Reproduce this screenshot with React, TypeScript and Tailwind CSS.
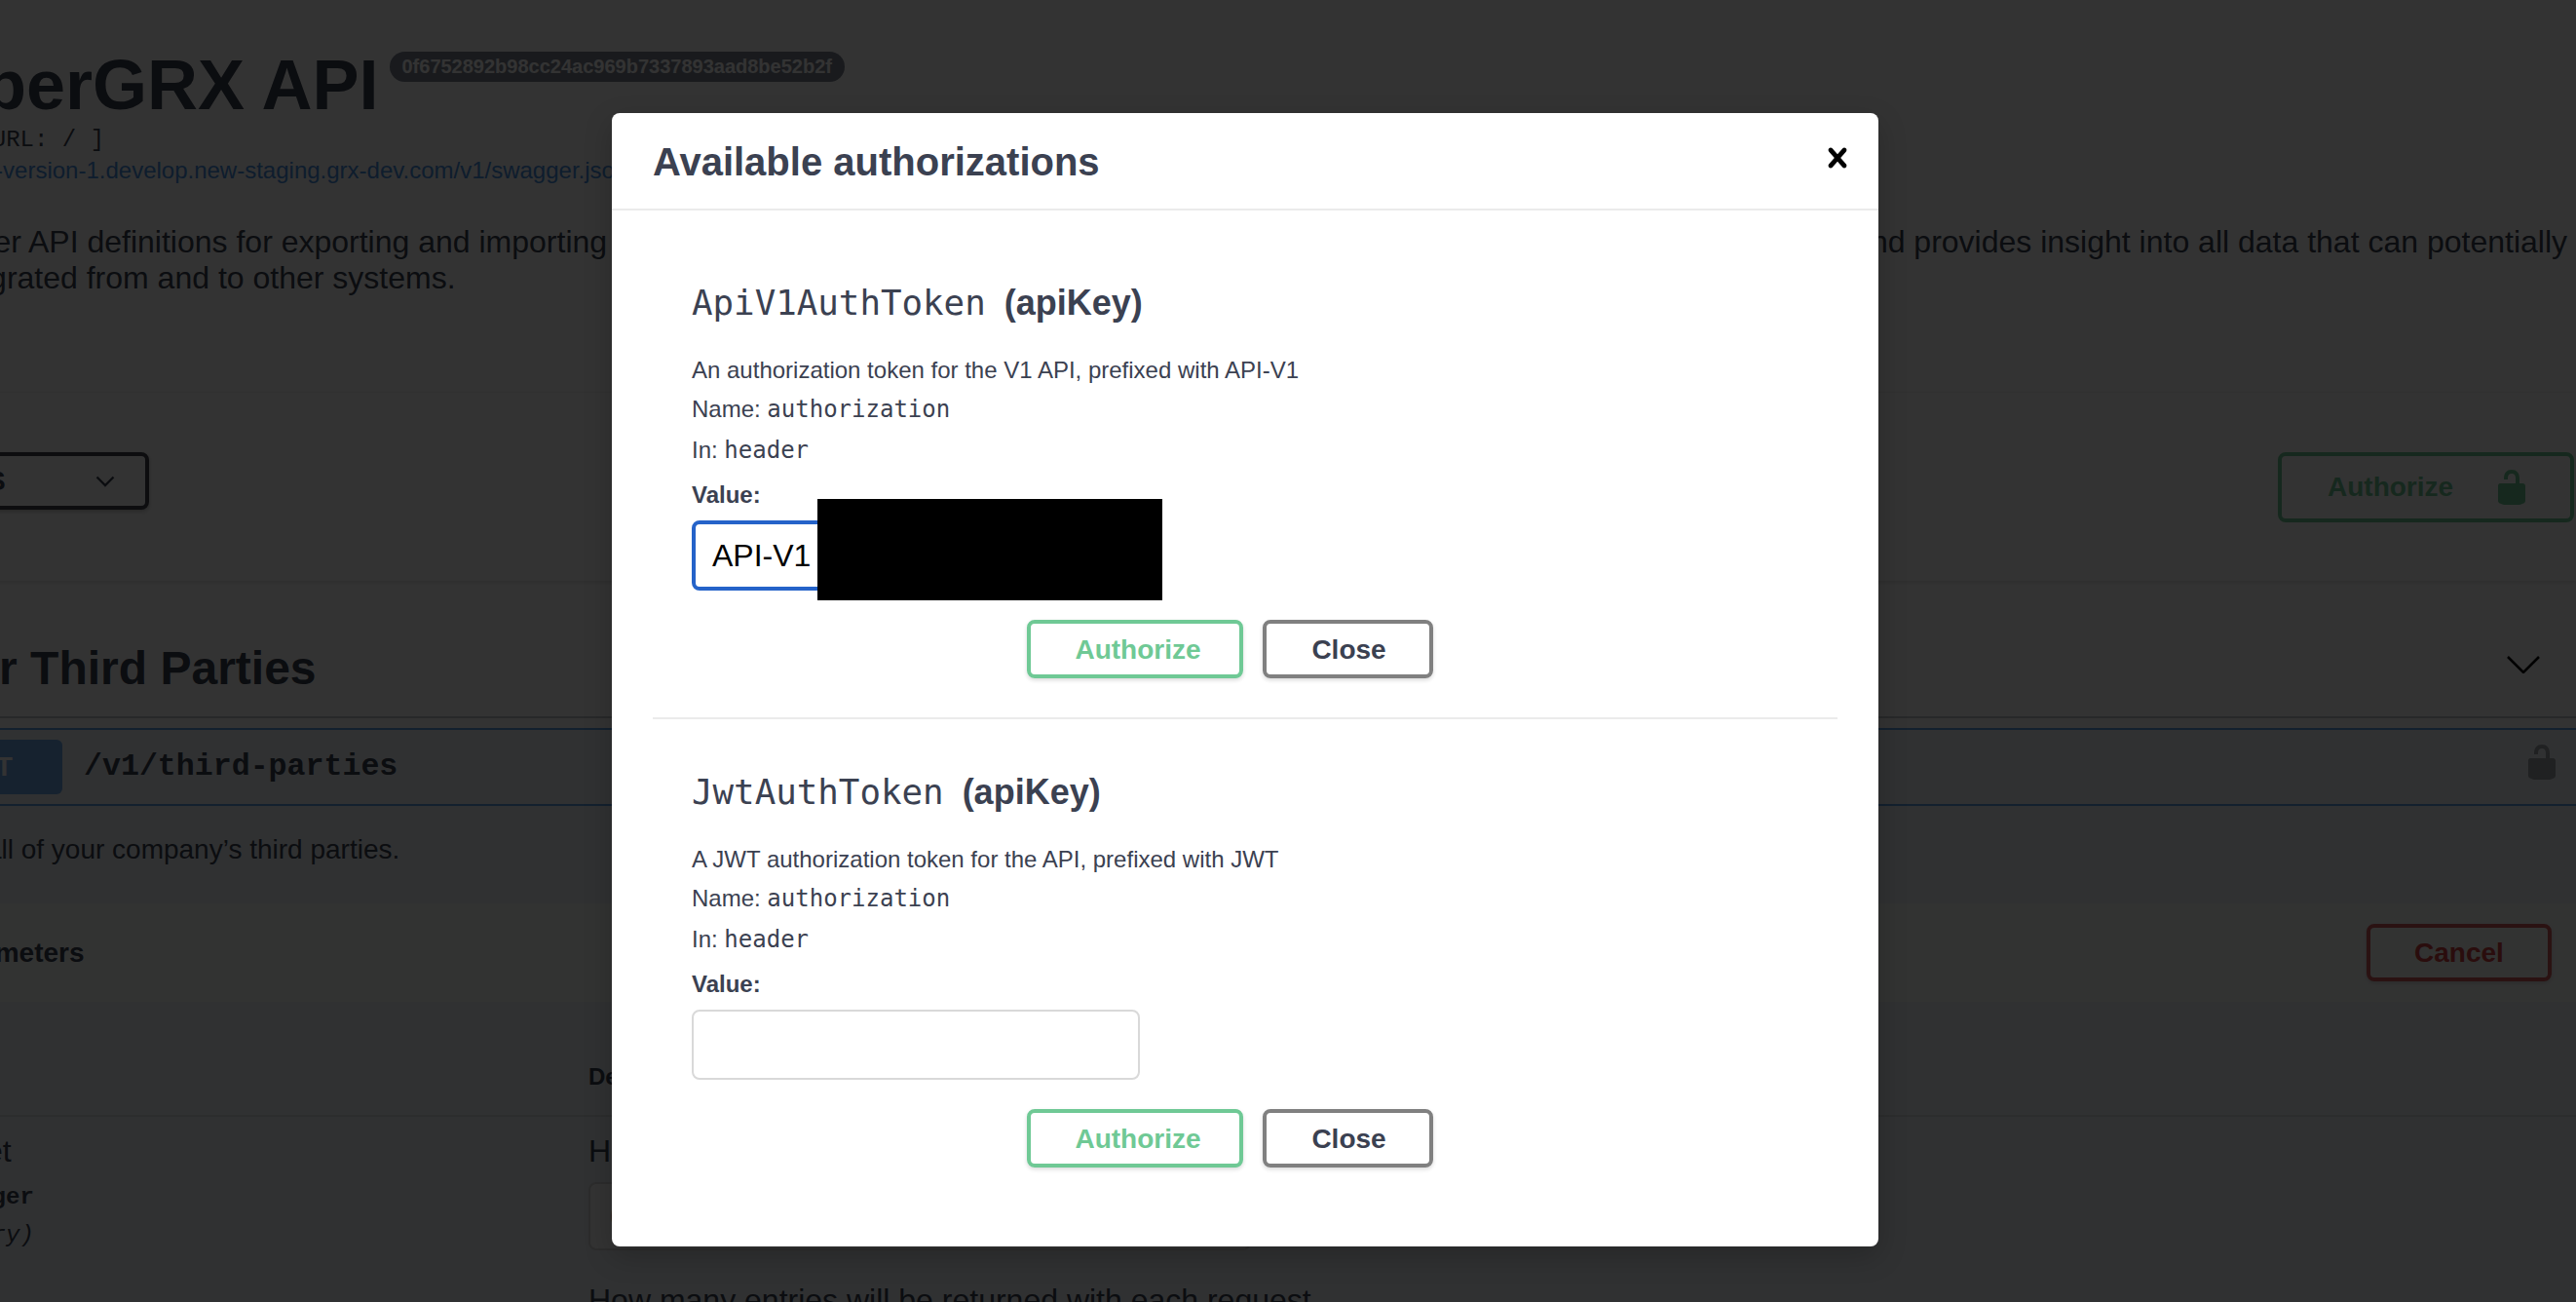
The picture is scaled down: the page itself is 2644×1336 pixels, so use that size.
import React from 'react';

// swagger-ui's own glyphs
const UnlockedIcon = ({ className }: { className: string }) => (
  <svg viewBox="0 0 20 20" className={className} fill="currentColor">
    <path d="M15.8 8H14V5.6C14 2.703 12.665 1 10 1 7.334 1 6 2.703 6 5.6V6h2v-.801C8 3.754 8.797 3 10 3c1.203 0 2 .754 2 2.199V8H4c-.553 0-1 .646-1 1.199V17c0 .549.428 1.139.951 1.307l1.197.387C5.672 18.861 6.55 19 7.1 19h5.8c.549 0 1.428-.139 1.951-.307l1.196-.387c.524-.167.953-.757.953-1.306V9.199C17 8.646 16.352 8 15.8 8z" />
  </svg>
);

const CloseIcon = () => (
  <svg viewBox="0 0 20 20" className="w-[40px] h-[40px] text-black" fill="currentColor">
    <path d="M14.348 14.849c-.469.469-1.229.469-1.697 0L10 11.819l-2.651 3.029c-.469.469-1.229.469-1.697 0-.469-.469-.469-1.229 0-1.697l2.758-3.15-2.759-3.152c-.469-.469-.469-1.228 0-1.697.469-.469 1.228-.469 1.697 0L10 8.183l2.651-3.031c.469-.469 1.228-.469 1.697 0 .469.469.469 1.229 0 1.697l-2.758 3.152 2.758 3.15c.469.469.469 1.229 0 1.698z" />
  </svg>
);

function AuthBlock({ name, description, value }: { name: string; description: string; value?: string }) {
  return (
    <div className="pl-[40px]">
      <h4 className="text-[36px] leading-[42px] font-bold whitespace-nowrap">
        <span className="font-['DejaVu_Sans_Mono',monospace] font-normal text-[35.8px]">{name}</span>
        <span className="ml-[19px]">(apiKey)</span>
      </h4>
      <p className="mt-[34px] text-[24px] leading-[28px]">{description}</p>
      <p className="mt-[12px] text-[24px] leading-[28px]">
        Name: <code className="font-['DejaVu_Sans_Mono',monospace]">authorization</code>
      </p>
      <p className="mt-[14px] text-[24px] leading-[28px]">
        In: <code className="font-['DejaVu_Sans_Mono',monospace]">header</code>
      </p>
      <p className="mt-[18px] text-[24px] leading-[28px] font-bold">Value:</p>
      {value ? (
        <div className="relative mt-[12px] w-[460px] h-[72px]">
          <div className="h-full rounded-[8px] border-[4px] border-[#2563c9] bg-white pl-[17px] flex items-center text-[32px] text-black">
            {value}
          </div>
          {/* redaction block pasted over the token */}
          <div className="absolute left-[129px] top-[-22px] w-[354px] h-[104px] bg-black" />
        </div>
      ) : (
        <div className="mt-[12px] w-[460px] h-[72px] rounded-[8px] border-2 border-[#d9d9d9] bg-white" />
      )}
      <div className="mt-[30px] ml-[344px] flex gap-[20px] text-[28px] font-bold">
        <button className="w-[222px] h-[60px] pl-[6px] pt-[2px] rounded-[8px] border-[4px] border-[#6fc995] text-[#6fc995] shadow-[0_2px_4px_rgba(0,0,0,0.15)]">
          Authorize
        </button>
        <button className="w-[175px] h-[60px] pl-[2px] pt-[2px] rounded-[8px] border-[4px] border-[#808080] shadow-[0_2px_4px_rgba(0,0,0,0.15)]">
          Close
        </button>
      </div>
    </div>
  );
}

function SwaggerPage() {
  return (
    <div className="w-[calc(100%+114px)] -ml-[114px] text-[#3b4151]">
      {/* Info */}
      <div className="h-[403px] pt-[46px]">
        <div className="ml-[5px] flex items-start">
          <h1 className="text-[72px] leading-[83px] font-bold whitespace-nowrap">CyberGRX API</h1>
          <span className="ml-[12px] mt-[7px] h-[31px] pl-[12px] pr-[13px] rounded-full bg-[#7d8492] text-white text-[20px] leading-[31px] font-bold">
            0f6752892b98cc24ac969b7337893aad8be52b2f
          </span>
        </div>
        <div className="ml-[5px] mt-[1px] font-['Liberation_Mono',monospace] text-[24px] leading-[28px]">[ Base URL: / ]</div>
        <div className="ml-[5px] mt-[2px] text-[24px] leading-[30px] text-[#4990e2] whitespace-nowrap">
          https://api-version-1.develop.new-staging.grx-dev.com/v1/swagger.json
        </div>
        <div className="mt-[40px] -ml-[10px] text-[32px] leading-[37px] w-[2759px]">
          <div className="flex justify-between whitespace-nowrap">
            <span>Developer API definitions for exporting and importing third party data</span>
            <span>and provides insight into all data that can potentially</span>
          </div>
          <div className="ml-[17px] whitespace-nowrap">be integrated from and to other systems.</div>
        </div>
      </div>

      {/* Scheme bar */}
      <div className="h-[193px] pt-[61px] pr-[2px] flex items-start justify-between bg-white shadow-[0_1px_4px_rgba(0,0,0,0.15)] relative">
        <div className="w-[267px] h-[59px] pl-[24px] pr-[31px] flex items-center justify-between rounded-[8px] border-[4px] border-[#41444e] bg-white shadow-[0_2px_4px_rgba(0,0,0,0.25)] text-[28px] font-bold">
          HTTPS
          <svg viewBox="0 0 20 12" className="w-[20px] h-[12px]" fill="none" stroke="currentColor" strokeWidth="2.4">
            <path d="M1.5 1.5 10 10l8.5-8.5" />
          </svg>
        </div>
        <button className="w-[304px] h-[72px] pl-[47px] pr-[46px] flex items-center justify-between rounded-[8px] border-[4px] border-[#6fc995] text-[#6fc995] text-[28px] font-bold">
          Authorize
          <UnlockedIcon className="w-[40px] h-[40px] -mr-[6px]" />
        </button>
      </div>

      {/* Tag */}
      <div className="pt-[62px] pl-[26px] pr-[37px] pb-[21px] flex items-center justify-between border-b-2 border-[#c4c6ca]">
        <h3 className="text-[48px] leading-[56px] font-bold whitespace-nowrap">Your Third Parties</h3>
        <svg viewBox="0 0 34 18" className="w-[34px] h-[18px] -mt-[8px]" fill="none" stroke="#000" strokeWidth="2.5">
          <path d="M1 1l16 16L33 1" />
        </svg>
      </div>

      {/* Operation */}
      <div className="mt-[10px] ml-[8px] bg-[#eef4fb]">
        <div className="h-[80px] pl-[10px] pr-[15px] flex items-center border-y-2 border-[#61a0e4]">
          <span className="w-[160px] h-[56px] rounded-[6px] bg-[#6fa9ec] text-white text-[28px] font-bold flex items-center justify-center">
            GET
          </span>
          <span className="ml-[22px] font-['Liberation_Mono',monospace] font-bold text-[31.6px]">/v1/third-parties</span>
          <UnlockedIcon className="w-[40px] h-[40px] ml-auto -mt-[10px] text-[#a0a4a8]" />
        </div>
        <p className="pt-[28px] pl-[39px] pb-[38px] text-[28px] leading-[34px]">Get all of your company’s third parties.</p>

        <div className="h-[101px] pl-[40px] pr-[25px] flex items-center justify-between bg-[#fbfdfb]">
          <h4 className="text-[28px] font-bold">Parameters</h4>
          <button className="w-[190px] h-[59px] rounded-[8px] border-[4px] border-[#cf5a5a] text-[#cf4444] text-[28px] font-bold shadow-[0_2px_4px_rgba(0,0,0,0.15)]">
            Cancel
          </button>
        </div>

        <div className="pl-[40px]">
          <div className="grid grid-cols-[670px_1fr] pt-[63px] pb-[25px] border-b-2 border-[#dcdee2] text-[24px] leading-[28px] font-bold">
            <span>Name</span>
            <span>Description</span>
          </div>
          <div className="grid grid-cols-[670px_1fr] pt-[17px]">
            <div>
              <div className="text-[32px] leading-[37px]">offset</div>
              <div className="mt-[15px] font-['Liberation_Mono',monospace] font-bold text-[24px] leading-[28px]">integer</div>
              <div className="mt-[11px] font-['Liberation_Mono',monospace] italic text-[24px] leading-[28px]">(query)</div>
            </div>
            <div>
              <div className="text-[32px] leading-[37px]">How many entries will be skipped</div>
              <div className="mt-[13px] w-[680px] h-[70px] pl-[20px] flex items-center rounded-[8px] border-2 border-[#d9d9d9] bg-white text-[32px] text-[#9a9a9a]">
                0
              </div>
              <div className="mt-[33px] text-[32px] leading-[37px]">How many entries will be returned with each request.</div>
            </div>
          </div>
        </div>
      </div>
    </div>
  );
}

export default function App() {
  return (
    <div className="relative h-screen w-full overflow-hidden bg-white font-['Liberation_Sans',Arial,sans-serif]">
      <SwaggerPage />

      {/* Backdrop + dialog */}
      <div className="absolute inset-0 bg-[rgba(0,0,0,0.8)]">
        <div className="ml-[628px] mt-[116px] w-[1300px] h-[1163px] rounded-[8px] bg-white text-[#3b4151] shadow-[0_10px_30px_rgba(0,0,0,0.2)]">
          <div className="h-[100px] pl-[42px] pr-[22px] flex items-start justify-between border-b-2 border-[#ebebeb]">
            <h3 className="pt-[27px] text-[40px] leading-[46px] font-bold">Available authorizations</h3>
            <button className="mt-[26px]">
              <CloseIcon />
            </button>
          </div>
          <div className="px-[42px]">
            <div className="pt-[74px] pb-[40px] border-b-2 border-[#ebebeb]">
              <AuthBlock
                name="ApiV1AuthToken"
                description="An authorization token for the V1 API, prefixed with API-V1"
                value="API-V1"
              />
            </div>
            <div className="pt-[54px]">
              <AuthBlock name="JwtAuthToken" description="A JWT authorization token for the API, prefixed with JWT" />
            </div>
          </div>
        </div>
      </div>
    </div>
  );
}
